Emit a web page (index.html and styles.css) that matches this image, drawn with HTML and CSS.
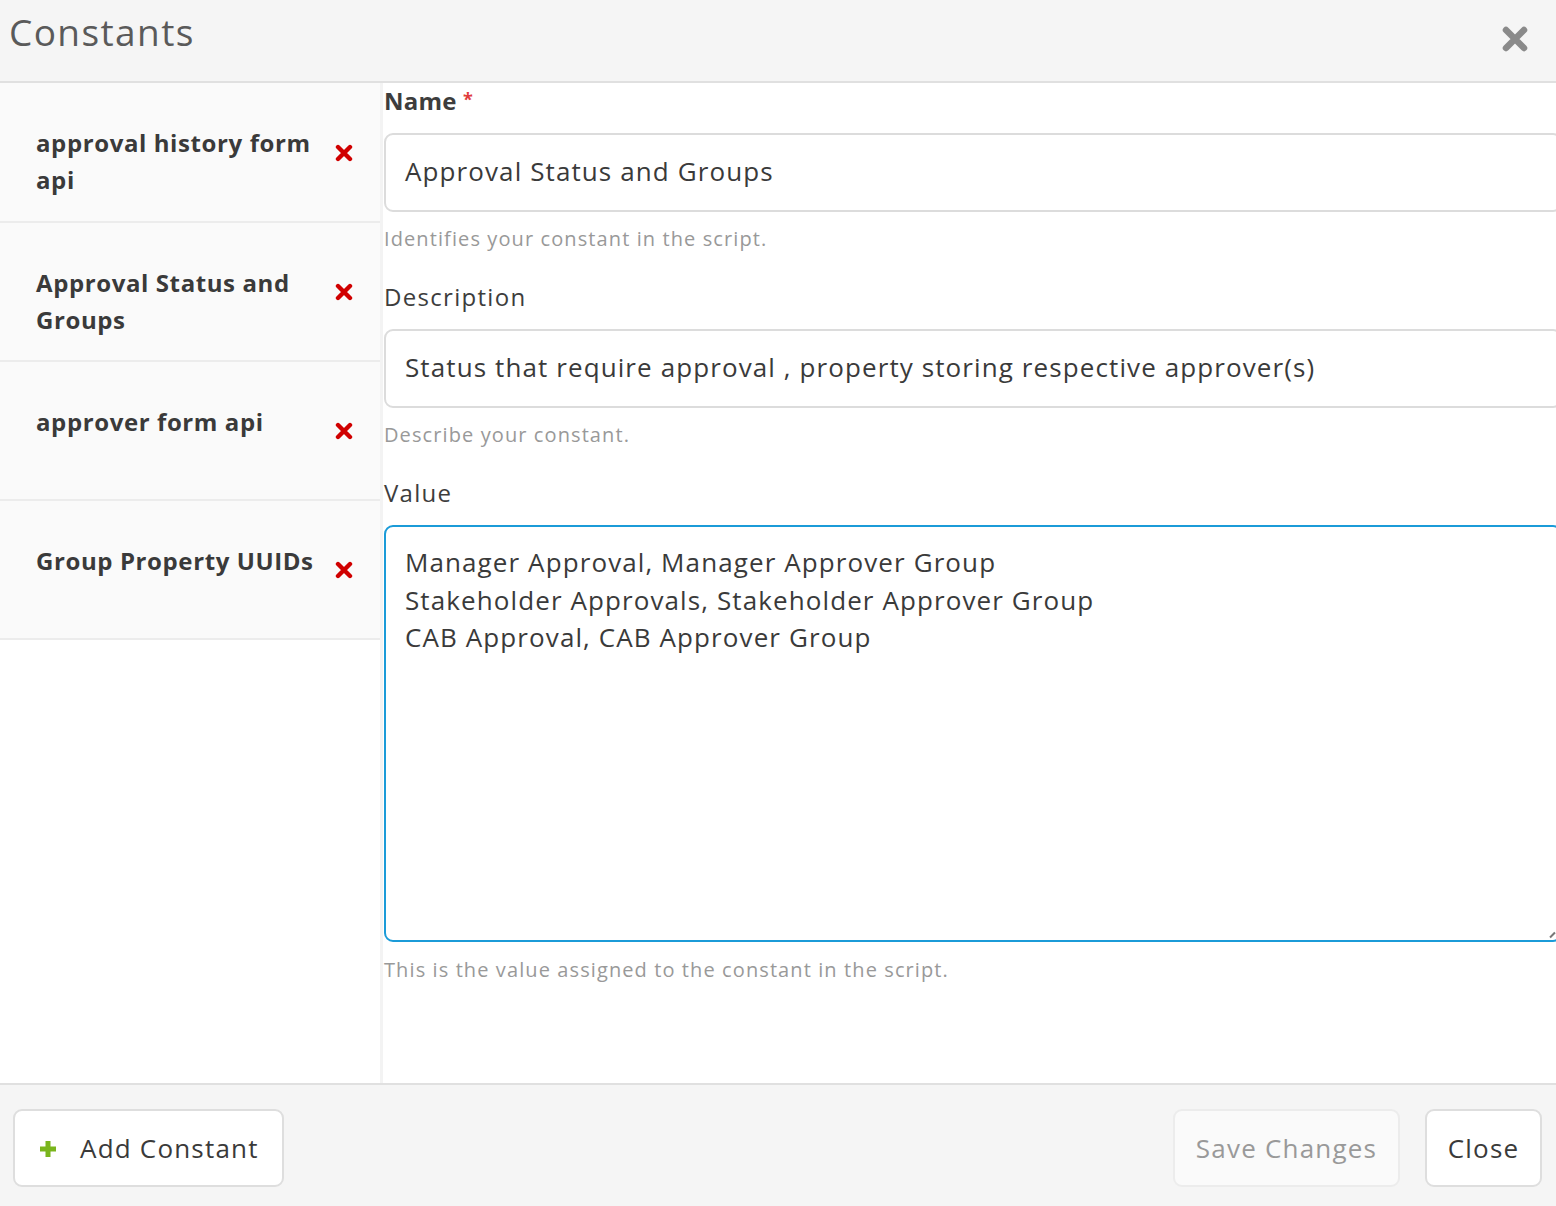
FILE: index.html
```html
<!DOCTYPE html>
<html lang="en">
<head>
<meta charset="utf-8">
<title>Constants</title>
<link rel="stylesheet" href="styles.css">
</head>
<body>
<div class="modal">
  <header class="modal-header">
    <h1 class="modal-title">Constants</h1>
    <button class="close-x" aria-label="Close">
      <svg width="26" height="26" viewBox="0 0 26 26"><path d="M4 4 L22 22 M22 4 L4 22" stroke="#8a8a8a" stroke-width="6.5" stroke-linecap="round"/></svg>
    </button>
  </header>
  <div class="modal-body">
    <aside class="sidebar">
      <div class="item"><span class="item-name">approval history form api</span><span class="del"><svg width="18" height="18" viewBox="0 0 18 18"><path d="M3 3 L15 15 M15 3 L3 15" stroke="#d00000" stroke-width="4.4" stroke-linecap="round"/></svg></span></div>
      <div class="item"><span class="item-name">Approval Status and Groups</span><span class="del"><svg width="18" height="18" viewBox="0 0 18 18"><path d="M3 3 L15 15 M15 3 L3 15" stroke="#d00000" stroke-width="4.4" stroke-linecap="round"/></svg></span></div>
      <div class="item"><span class="item-name">approver form api</span><span class="del"><svg width="18" height="18" viewBox="0 0 18 18"><path d="M3 3 L15 15 M15 3 L3 15" stroke="#d00000" stroke-width="4.4" stroke-linecap="round"/></svg></span></div>
      <div class="item"><span class="item-name">Group Property UUIDs</span><span class="del"><svg width="18" height="18" viewBox="0 0 18 18"><path d="M3 3 L15 15 M15 3 L3 15" stroke="#d00000" stroke-width="4.4" stroke-linecap="round"/></svg></span></div>
    </aside>
    <main class="form">
      <label class="label bold">Name <span class="req">*</span></label>
      <div class="input first">Approval Status and Groups</div>
      <p class="help">Identifies your constant in the script.</p>
      <label class="label gap-desc">Description</label>
      <div class="input">Status that require approval , property storing respective approver(s)</div>
      <p class="help">Describe your constant.</p>
      <label class="label gap-value">Value</label>
      <div class="textarea">Manager Approval, Manager Approver Group<br>Stakeholder Approvals, Stakeholder Approver Group<br>CAB Approval, CAB Approver Group<span class="grip"></span></div>
      <p class="help">This is the value assigned to the constant in the script.</p>
    </main>
  </div>
  <footer class="modal-footer">
    <button class="btn add"><svg width="20" height="20" viewBox="0 0 20 20"><path d="M10 2 V18 M2 10 H18" stroke="#7ab51d" stroke-width="5"/></svg><span>Add Constant</span></button>
    <div class="spacer"></div>
    <button class="btn save">Save Changes</button>
    <button class="btn close">Close</button>
  </footer>
</div>
</body>
</html>
```

FILE: styles.css
```css
* { box-sizing: border-box; }
html, body { margin: 0; padding: 0; }
body {
  width: 1556px;
  height: 1206px;
  overflow: hidden;
  font-family: "Open Sans", "Liberation Sans", sans-serif;
  color: #3d3d3d;
  background: #fff;
}
.modal {
  display: flex;
  flex-direction: column;
  height: 1206px;
}
.modal-header {
  height: 83px;
  background: #f5f5f5;
  border-bottom: 2px solid #e0e0e0;
  display: flex;
  align-items: center;
  justify-content: space-between;
  padding: 0 28px 0 9px;
}
.modal-title {
  margin: 0 0 18px 0;
  font-size: 37px;
  font-weight: 400;
  color: #5a5a5a;
  letter-spacing: 1.4px;
}
.close-x {
  background: none;
  border: 0;
  padding: 0;
  width: 26px;
  height: 26px;
  display: flex;
  margin-bottom: 3px;
}
.modal-body {
  display: flex;
  height: 1000px;
}
.sidebar {
  width: 383px;
  border-right: 3px solid #f3f3f3;
  background: #fff;
}
.item {
  height: 139px;
  background: #fafafa;
  border-bottom: 2px solid #ececec;
  display: flex;
  align-items: center;
  padding: 0 26px 0 36px;
}
.item:first-child { height: 140px; }
.item-name {
  flex: 1;
  align-self: flex-start;
  padding-top: 41px;
  font-size: 24px;
  font-weight: 700;
  line-height: 37px;
  color: #3a3a3a;
  padding-right: 14px;
  letter-spacing: 0.6px;
}
.del {
  display: flex;
  margin-top: 1px;
  margin-right: 1px;
}
.form {
  flex: 1;
  display: flex;
  flex-direction: column;
  padding-left: 1px;
  margin-right: -6px;
  min-width: 0;
}
.label {
  font-size: 24px;
  color: #3d3d3d;
  line-height: 34px;
  letter-spacing: 1.3px;
}
.label.bold { font-weight: 700; margin-top: 1px; letter-spacing: 0.2px; }
.req { color: #e03c3c; font-size: 18px; vertical-align: top; position: relative; top: -2px; }
.input {
  margin-top: 15px;
  height: 79px;
  border: 2px solid #dcdcdc;
  border-radius: 9px;
  padding: 0 19px 4px;
  display: flex;
  align-items: center;
  font-size: 26px;
  color: #3a3a3a;
  white-space: nowrap;
  letter-spacing: 1.1px;
}
.help {
  margin: 13px 0 0 0;
  font-size: 20px;
  line-height: 28px;
  color: #999;
  letter-spacing: 1.1px;
}
.gap-desc { margin-top: 27px; }
.gap-value { margin-top: 27px; }
.textarea {
  position: relative;
  margin-top: 15px;
  height: 417px;
  border: 2px solid #1b9bd8;
  border-radius: 9px;
  padding: 17px 19px;
  font-size: 26px;
  line-height: 37.5px;
  color: #3a3a3a;
  white-space: nowrap;
  letter-spacing: 1.1px;
}
.grip {
  position: absolute;
  right: 4px;
  bottom: 4px;
  width: 7px;
  height: 2px;
  background: #777;
  transform: rotate(-45deg);
}
.textarea + .help { margin-top: 14px; }
.modal-footer {
  flex: 1;
  background: #f5f5f5;
  border-top: 2px solid #e0e0e0;
  display: flex;
  align-items: center;
  padding: 4px 14px 0 13px;
}
.spacer { flex: 1; }
.btn {
  height: 78px;
  border: 2px solid #dedede;
  border-radius: 9px;
  background: #fff;
  font-family: inherit;
  font-size: 26px;
  color: #3a3a3a;
  padding: 0 10px;
  display: flex;
  align-items: center;
  letter-spacing: 1.2px;
  white-space: nowrap;
}
.btn.add { width: 271px; padding-left: 23px; gap: 22px; }
.btn.add svg { margin-top: 3px; }
.btn.save { width: 227px; justify-content: center; background: #fafafa; border-color: #ececec; color: #999; margin-right: 25px; }
.btn.close { width: 117px; justify-content: center; }
```
